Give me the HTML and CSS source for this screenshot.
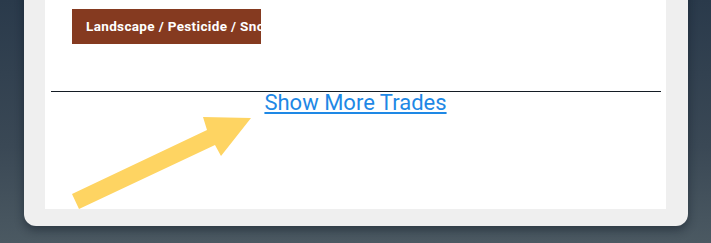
FILE: index.html
```html
<!DOCTYPE html>
<html>
<head>
<meta charset="utf-8">
<link rel="stylesheet" href="styles.css">
</head>
<body>
<div class="page">
  <div class="card">
    <div class="panel">
      <div class="tag">Landscape / Pesticide / Snow Removal</div>
      <div class="rule"></div>
      <div class="more"><a href="#" class="more-link">Show More Trades</a></div>
      <svg class="arrow" width="621" height="209" viewBox="45 0 621 209" xmlns="http://www.w3.org/2000/svg">
        <polygon points="72,194 207,130 203,117 251,118 221,156 215,145 79,209" fill="#fed462"/>
      </svg>
    </div>
  </div>
</div>
</body>
</html>
```
FILE: styles.css
```css
html, body {
  margin: 0;
  padding: 0;
  height: 100%;
}
body {
  background: linear-gradient(to bottom, #2a3a4b 0%, #3a4855 60%, #4b5962 100%);
  font-family: "Roboto", "Liberation Sans", sans-serif;
  overflow: hidden;
}
.page {
  padding: 0 23px 0 24px;
}
.card {
  margin-top: -20px;
  background: #efefef;
  border-radius: 12px;
  padding: 20px 22px 17px 21px;
  box-shadow: 0 4px 10px rgba(10, 20, 30, 0.45);
}
.panel {
  position: relative;
  background: #ffffff;
  height: 209px;
  box-sizing: border-box;
  padding-top: 9px;
}
.tag {
  margin-left: 27px;
  width: 189px;
  height: 35px;
  box-sizing: border-box;
  background: #853a20;
  color: #ffffff;
  font-size: 13.5px;
  font-weight: 700;
  line-height: 35px;
  padding-left: 14px;
  white-space: nowrap;
  overflow: hidden;
  letter-spacing: 0.35px;
}
.rule {
  margin: 47px 5px 0 6px;
  height: 1px;
  background: #141c24;
}
.more {
  text-align: center;
  line-height: 22px;
}
.more-link {
  color: #1e88e5;
  font-size: 22px;
  text-decoration: underline;
  text-decoration-thickness: 1.5px;
  text-underline-offset: 2px;
}
.arrow {
  position: absolute;
  left: 0;
  top: 0;
  pointer-events: none;
}
```
